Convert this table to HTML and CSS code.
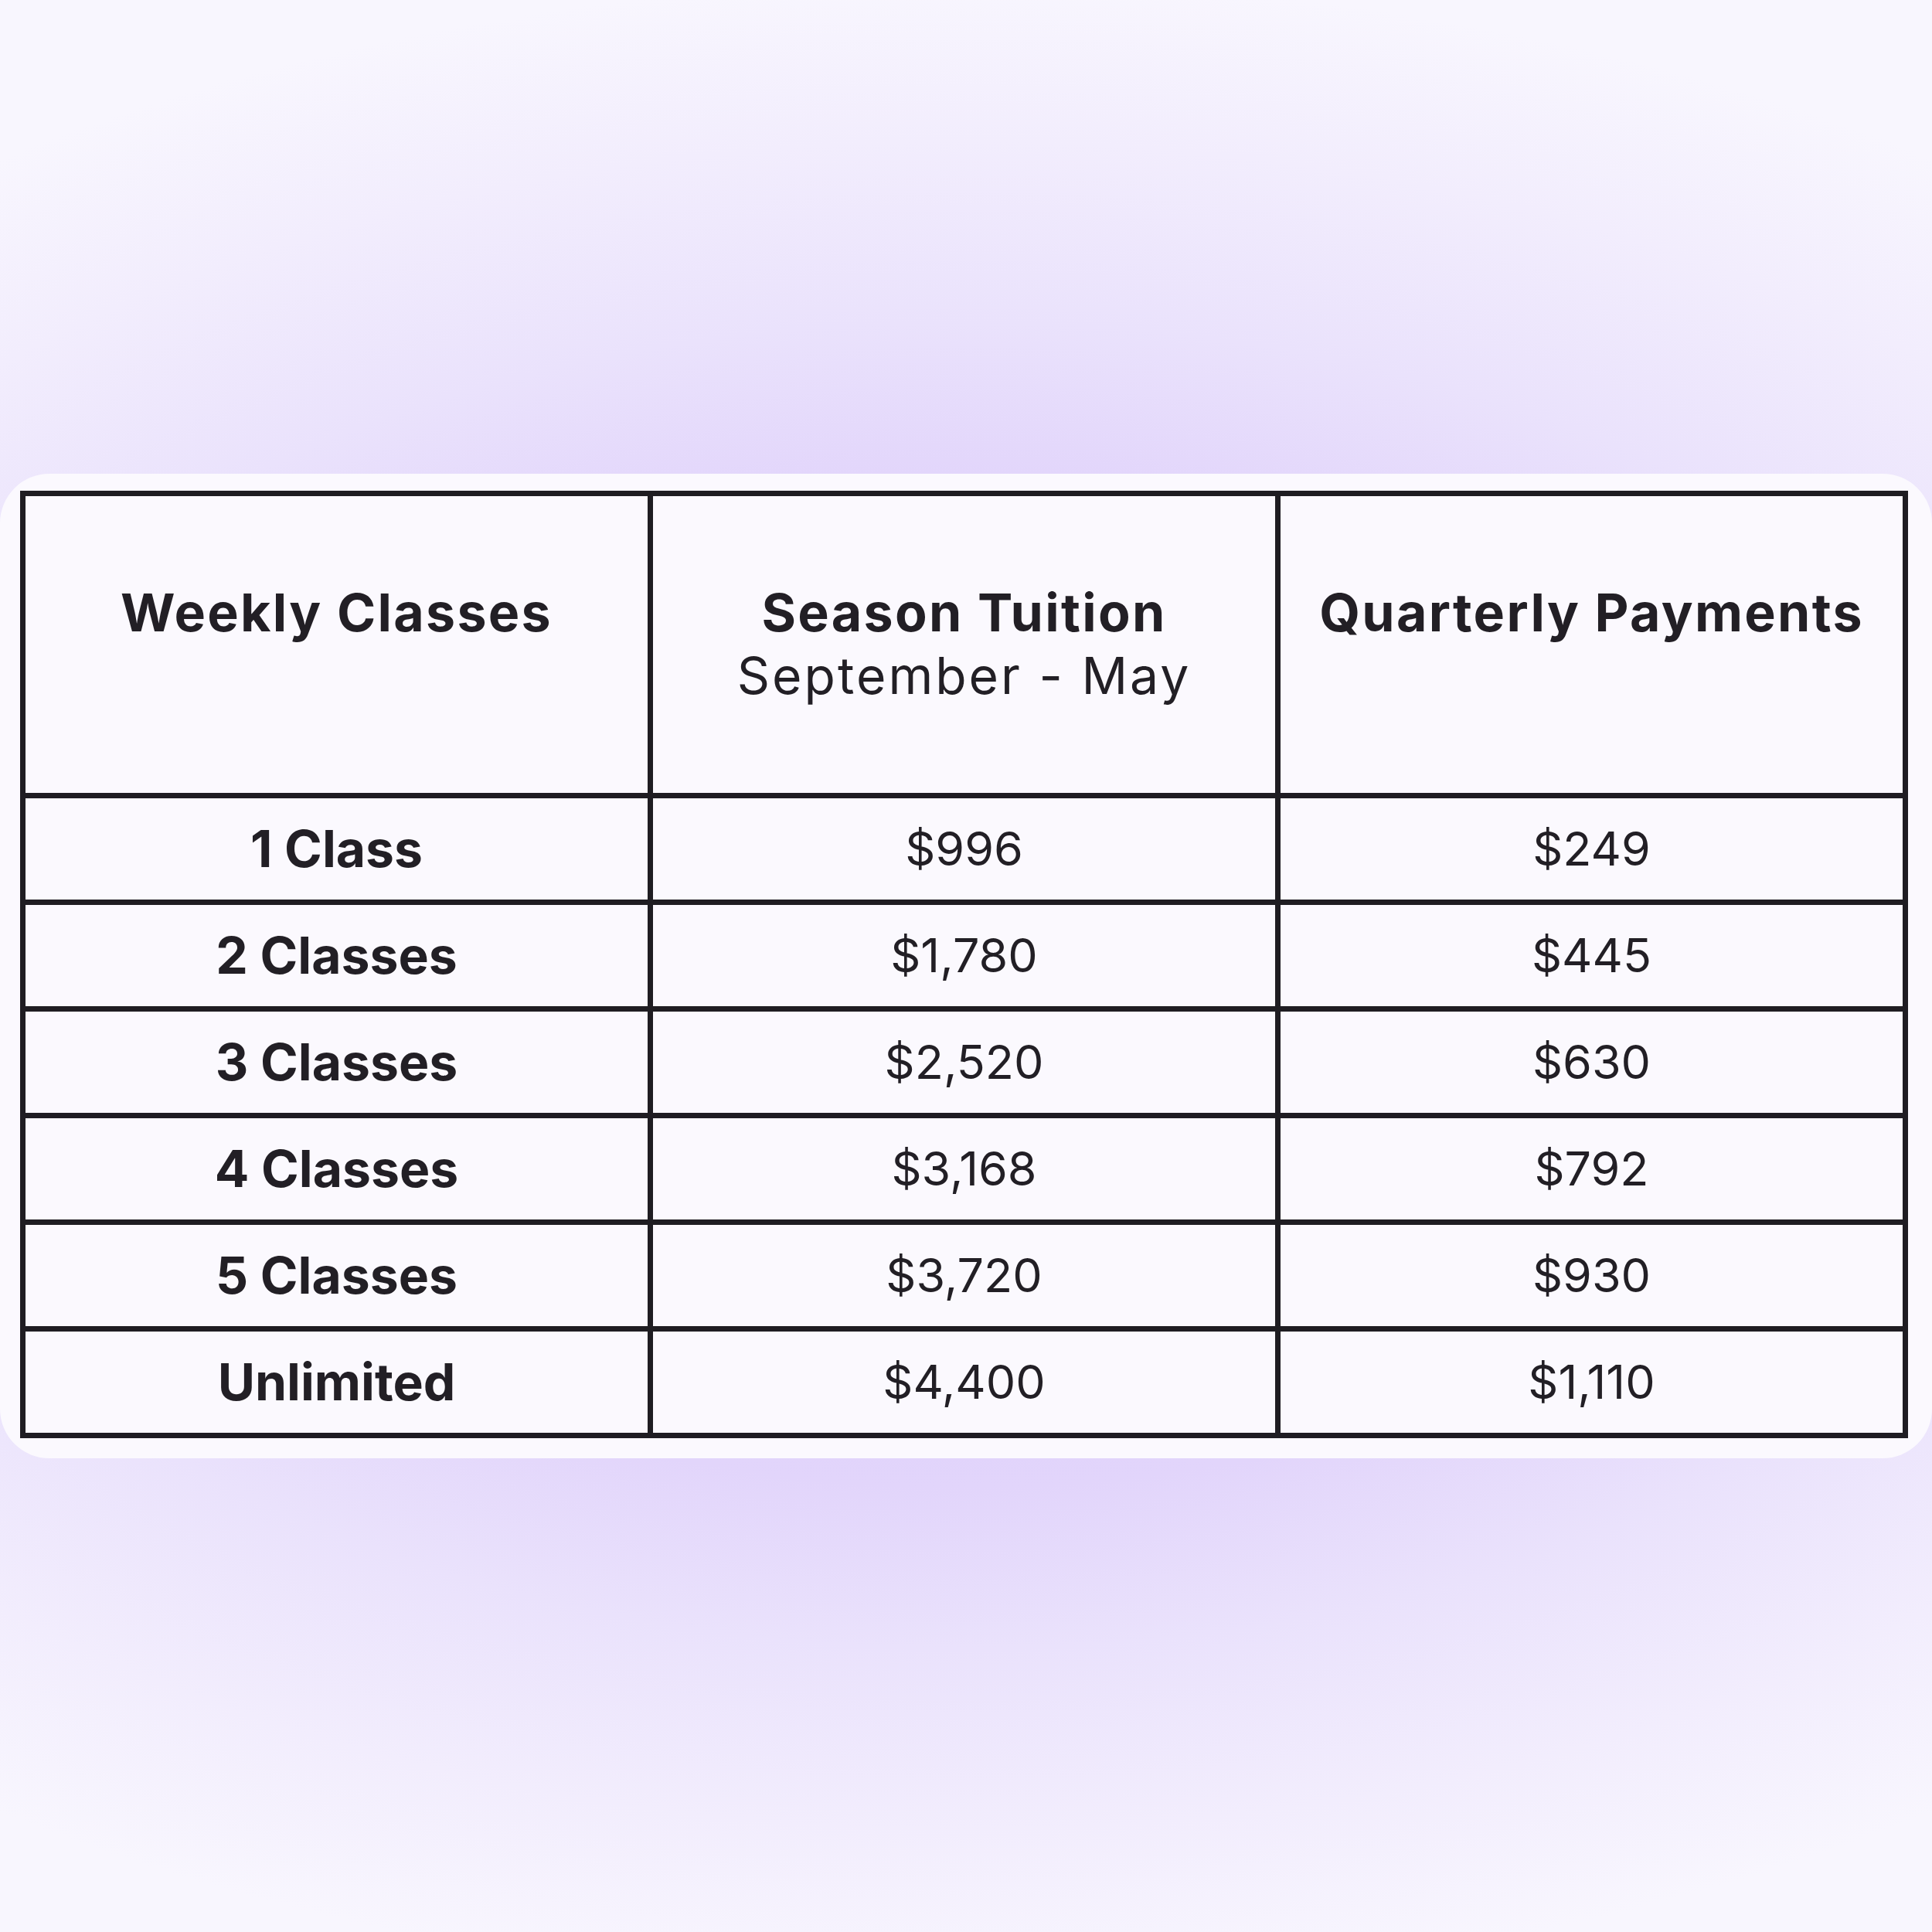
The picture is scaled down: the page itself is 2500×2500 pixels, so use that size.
FILE: index.html
```html
<!DOCTYPE html>
<html lang="en">
<head>
<meta charset="utf-8">
<title>Tuition</title>
<link rel="stylesheet" href="styles.css">
</head>
<body>
<div class="card">
  <table class="tuition">
    <thead>
      <tr class="head-row">
        <th>Weekly Classes</th>
        <th>Season Tuition<br><span class="sub">September - May</span></th>
        <th>Quarterly Payments</th>
      </tr>
    </thead>
    <tbody>
      <tr><th>1 Class</th><td>$996</td><td>$249</td></tr>
      <tr><th>2 Classes</th><td>$1,780</td><td>$445</td></tr>
      <tr><th>3 Classes</th><td>$2,520</td><td>$630</td></tr>
      <tr><th>4 Classes</th><td>$3,168</td><td>$792</td></tr>
      <tr><th>5 Classes</th><td>$3,720</td><td>$930</td></tr>
      <tr><th>Unlimited</th><td>$4,400</td><td>$1,110</td></tr>
    </tbody>
  </table>
</div>
</body>
</html>
```

FILE: styles.css
```css
html, body {
  margin: 0;
  padding: 0;
}
body {
  width: 2500px;
  height: 2500px;
  display: flex;
  align-items: center;
  justify-content: center;
  background: radial-gradient(ellipse 2200px 1300px at 50% 51%, #d9c9fb 0%, #e2d5fb 50%, #eae2fc 66%, #f2edfd 84%, #f8f6fe 100%);
  font-family: "Inter", "Liberation Sans", sans-serif;
  color: #221f25;
}
.card {
  width: 2500px;
  height: 1274px;
  box-sizing: border-box;
  padding: 22px 31px 24px 26px;
  background: #fbf9fe;
  border-radius: 64px;
}
.tuition {
  width: 100%;
  border-collapse: collapse;
  table-layout: fixed;
  border: 7px solid #1f1d22;
}
.tuition th,
.tuition td {
  border: 7px solid #1f1d22;
  text-align: center;
  vertical-align: middle;
  padding: 0;
}
.tuition th {
  font-weight: 700;
  font-size: 66px;
  line-height: 81px;
}
.tuition td {
  font-weight: 400;
  font-size: 61px;
  line-height: 81px;
}
.head-row th {
  height: 391px;
  vertical-align: top;
  padding-top: 110px;
  box-sizing: border-box;
  font-size: 68px;
  letter-spacing: 2.3px;
}
.sub {
  font-weight: 400;
  font-size: 66px;
  letter-spacing: 3px;
}
.tuition tbody tr {
  height: 138px;
}
```
